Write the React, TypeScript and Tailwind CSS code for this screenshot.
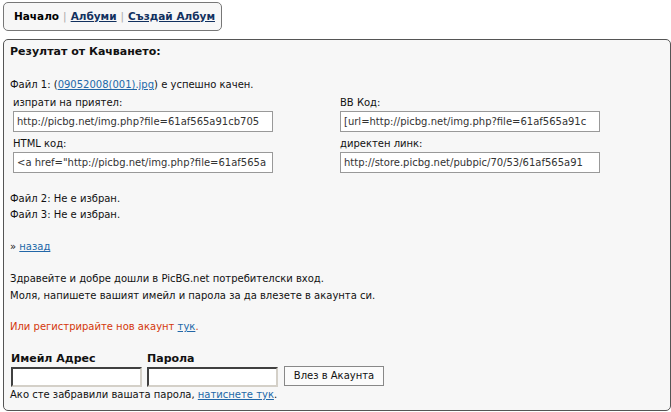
import React from "react";

const font = { fontFamily: "'DejaVu Sans', Verdana, sans-serif" };

function Field({ label, value }: { label: string; value: string }) {
  return (
    <div className="flex flex-col">
      <div className="h-[16px] leading-[16px]">{label}</div>
      <div className="w-[260px] h-[21px] border border-[#999] bg-white overflow-hidden whitespace-nowrap px-[3px] leading-[19px] text-[#333]">
        {value}
      </div>
    </div>
  );
}

export default function App() {
  return (
    <div
      className="w-[671px] h-[412px] bg-white text-[10px] text-[#111] pt-[2px] pl-[3px] overflow-hidden"
      style={font}
    >
      <div className="w-[219px] h-[29px] border border-[#777] rounded-[5px] bg-[#f7f7f7] flex items-center pl-[10px] font-bold text-[10.5px] gap-[4px] whitespace-nowrap">
        <span className="text-black">Начало</span>
        <span className="text-[#aaa] font-normal">|</span>
        <a className="text-[#12315f] underline">Албуми</a>
        <span className="text-[#aaa] font-normal">|</span>
        <a className="text-[#12315f] underline">Създай Албум</a>
      </div>

      <div className="mt-[8px] w-[668px] h-[372px] border border-[#555] rounded-[5px] bg-[#f7f7f7] pl-[6px] pt-[4px] leading-[16px]">
        <div className="font-bold text-[11px]">Резултат от Качването:</div>
        <div className="mt-[17px]">
          Файл 1: (<a className="text-[#2267a8] underline">09052008(001).jpg</a>) е успешно качен.
        </div>
        <div className="pl-[3px] mt-[2px] grid grid-cols-[327px_327px] gap-y-[4px]">
          <Field label="изпрати на приятел:" value="http://picbg.net/img.php?file=61af565a91cb705" />
          <Field label="BB Код:" value="[url=http://picbg.net/img.php?file=61af565a91c" />
          <Field label="HTML код:" value={'<a href="http://picbg.net/img.php?file=61af565a'} />
          <Field label="директен линк:" value="http://store.picbg.net/pubpic/70/53/61af565a91" />
        </div>
        <div className="mt-[18px]">Файл 2: Не е избран.</div>
        <div>Файл 3: Не е избран.</div>
        <div className="mt-[16px]">
          » <a className="text-[#2267a8] underline">назад</a>
        </div>
        <div className="mt-[16px]">Здравейте и добре дошли в PicBG.net потребителски вход.</div>
        <div className="mt-[1px]">Моля, напишете вашият имейл и парола за да влезете в акаунта си.</div>
        <div className="mt-[15px] text-[#d4380b]">
          Или регистрирайте нов акаунт <a className="text-[#2267a8] underline">тук</a>.
        </div>
        <div className="mt-[16px] flex items-end">
          <div className="flex flex-col w-[137px] pl-[1px]">
            <div className="font-bold text-[11px] leading-[16px]">Имейл Адрес</div>
            <div className="w-[131px] h-[20px] bg-white border-2 border-t-[#404040] border-l-[#404040] border-r-[#d4d0c8] border-b-[#d4d0c8]" />
          </div>
          <div className="flex flex-col w-[137px]">
            <div className="font-bold text-[11px] leading-[16px]">Парола</div>
            <div className="w-[131px] h-[20px] bg-white border-2 border-t-[#404040] border-l-[#404040] border-r-[#d4d0c8] border-b-[#d4d0c8]" />
          </div>
          <div className="mb-[1px] w-[100px] h-[20px] border border-[#888] bg-[#fbfbfb] flex items-center justify-center">
            Влез в Акаунта
          </div>
        </div>
        <div>
          Ако сте забравили вашата парола, <a className="text-[#2267a8] underline">натиснете тук</a>.
        </div>
      </div>
    </div>
  );
}
